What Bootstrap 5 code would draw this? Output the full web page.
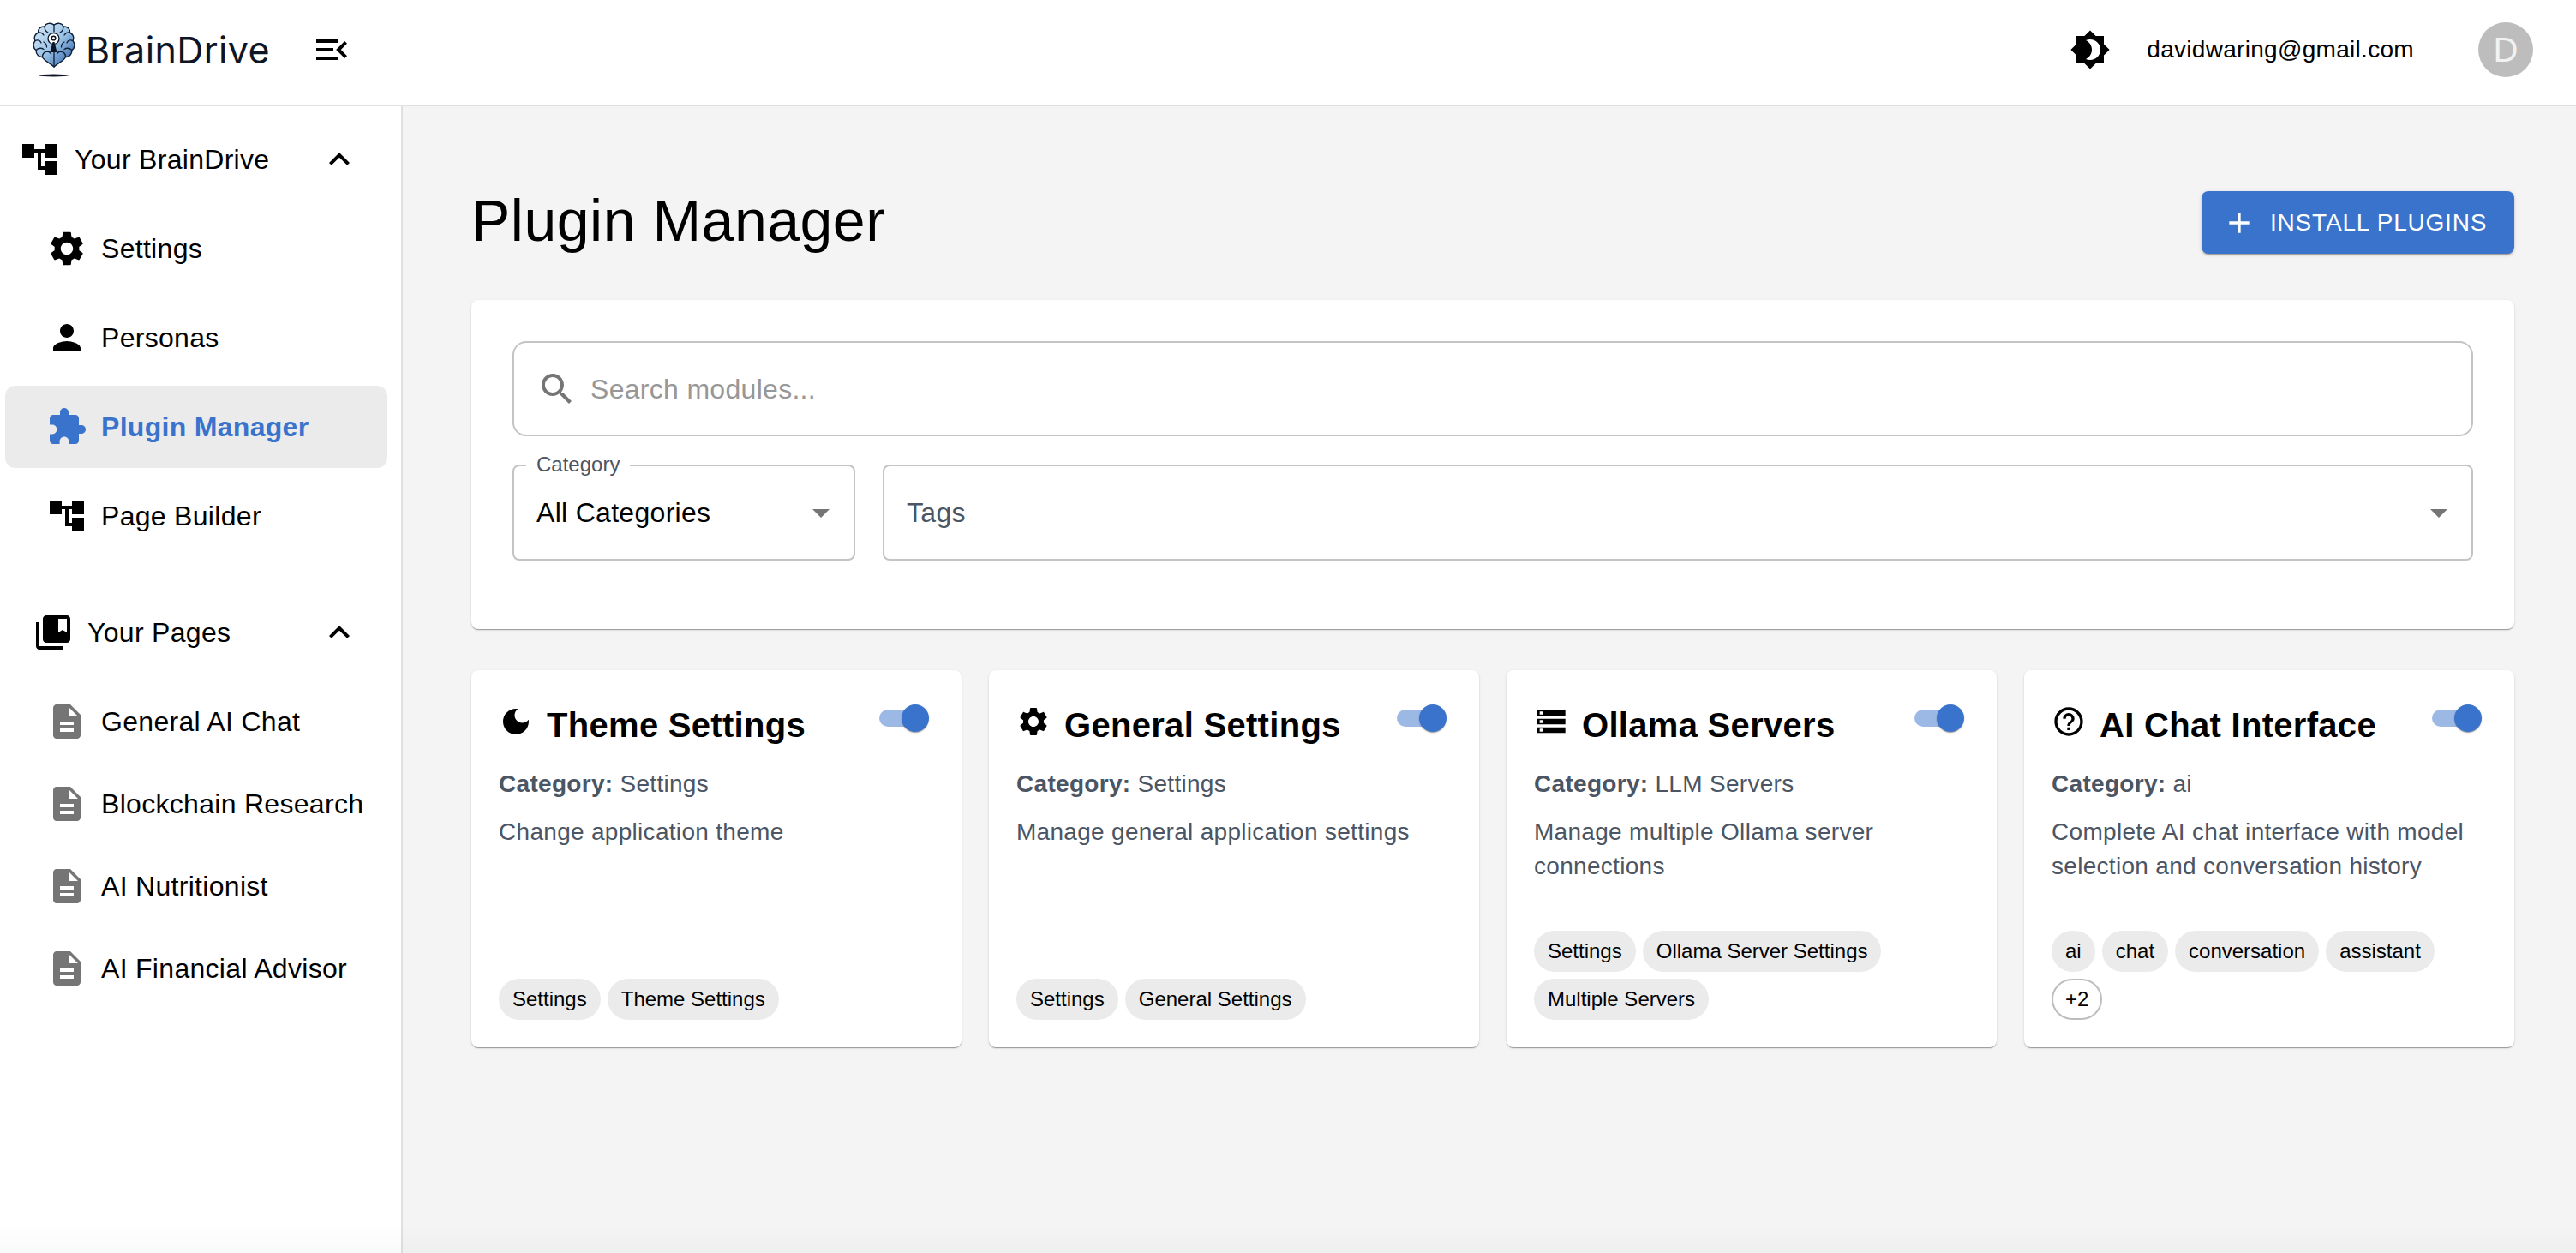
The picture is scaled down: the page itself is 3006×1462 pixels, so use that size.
<!DOCTYPE html>
<html lang="en">
<head>
<meta charset="utf-8">
<title>BrainDrive Plugin Manager</title>
<link href="https://cdn.jsdelivr.net/npm/bootstrap@5.3.0/dist/css/bootstrap.min.css" rel="stylesheet">
<style>
html,body{height:100%;}
body{margin:0;overflow:hidden;font-family:"Liberation Sans",Arial,sans-serif;background:#f4f4f4;color:#000;letter-spacing:.3px;}
svg{display:block;flex:none;fill:currentColor;}
.topbar{height:124px;background:#fff;border-bottom:2px solid #e0e0e0;padding:0 50px 6px 38px;}
.brand-name{font-family:Inter,sans-serif;font-weight:400;font-size:43px;letter-spacing:.4px;color:#0d1526;margin-left:12px;line-height:1;}
.menu-toggle{margin-left:48px;}
.user-mail{font-size:28px;margin-left:42px;margin-right:75px;}
.user-avatar{width:64px;height:64px;border-radius:50%;background:#bdbdbd;color:#f2f2f2;font-size:40px;letter-spacing:0;}
.shell{height:1338px;}
.side{width:470px;flex:none;background:#fff;border-right:2px solid #e0e0e0;padding:14px 16px 0 6px;}
.side-row{height:96px;font-size:32px;border-radius:12px;color:#000;text-decoration:none;}
.side-gap{margin-bottom:8px;}
.side-sub{padding-left:48px;gap:16px;}
.side-head1{padding-left:16px;gap:17px;}
.side-head2{padding-left:32px;gap:16px;margin-top:40px;}
.side-chev{margin-left:auto;margin-right:32px;}
.side-active{background:#ebebeb;color:#3a73cc;font-weight:700;}
.doc-ico{color:#757575;}
.main-area{padding:0 72px 0 80px;min-width:0;}
.page-head{height:226px;padding-top:99px;}
.page-title{font-size:68px;font-weight:400;line-height:1;margin:0;letter-spacing:.5px;}
.btn-install{width:365px;height:73px;background:#3a73cc;border:0;border-radius:8px;color:#fff;font-size:28px;letter-spacing:.8px;text-transform:uppercase;padding:0 0 0 24px;gap:16px;box-shadow:0 3px 1px -2px rgba(0,0,0,.2),0 2px 2px 0 rgba(0,0,0,.14),0 1px 5px 0 rgba(0,0,0,.12);}
.btn-install:hover{background:#3a73cc;color:#fff;}
.sheet{background:#fff;border:0;border-radius:8px;box-shadow:0 2px 1px -1px rgba(0,0,0,.2),0 1px 1px 0 rgba(0,0,0,.14),0 1px 3px 0 rgba(0,0,0,.12);}
.filter-sheet{height:384px;padding:48px;}
.search-box{height:111px;border:2px solid #c4c4c4;border-radius:16px;padding-left:26px;gap:15px;}
.search-ph{font-size:32px;color:#979797;}
.search-ico{color:#757575;}
.select-box{height:112px;border:2px solid #c4c4c4;border-radius:8px;font-size:32px;padding:0 14px 0 26px;}
.select-cat{width:400px;flex:none;}
.select-label{position:absolute;left:14px;top:-16px;background:#fff;padding:0 12px;font-size:24px;line-height:28px;color:#4b5563;letter-spacing:0;}
.select-ph{color:#4b5563;}
.select-ico{color:#757575;margin-left:auto;}
.filter-gap{gap:32px;margin-top:33px;}
.plug-grid{display:grid;grid-template-columns:repeat(4,1fr);gap:32px;margin-top:48px;}
.plug-sheet{height:440px;padding:32px;}
.plug-ico{width:40px;height:40px;}
.plug-title{font-size:40px;font-weight:700;line-height:48px;margin:0 0 0 16px;white-space:nowrap;letter-spacing:.3px;}
.plug-top{height:73px;margin-top:8px;}
.switch-track{position:relative;width:52px;height:20px;border-radius:10px;background:#9cb9e6;margin-left:auto;margin-right:12px;margin-top:6px;flex:none;}
.switch-thumb{position:absolute;right:-6px;top:-6px;width:32px;height:32px;border-radius:50%;background:#3a73cc;box-shadow:0 2px 1px -1px rgba(0,0,0,.2),0 1px 1px 0 rgba(0,0,0,.14),0 1px 3px 0 rgba(0,0,0,.12);}
.plug-meta{font-size:28px;line-height:40px;color:#4b5563;margin:0;}
.plug-desc{font-size:28px;line-height:40px;color:#4b5563;margin:16px 0 0;}
.chip-wrap{margin-top:auto;gap:8px;}
.tag-chip{height:48px;border-radius:24px;background:#ebebeb;font-size:24px;padding:0 16px;line-height:48px;color:#000;white-space:nowrap;letter-spacing:0;}
.tag-more{background:#fff;border:2px solid #bdbdbd;line-height:44px;padding:0 14px;}
.bottom-fade{position:fixed;left:0;right:0;bottom:0;height:36px;background:linear-gradient(to bottom,rgba(0,0,0,0),rgba(0,0,0,.018));pointer-events:none;}
</style>
</head>
<body>
<header class="topbar d-flex align-items-center">
  <svg width="50" height="66" viewBox="0 0 50 66" aria-label="BrainDrive logo">
    <defs><linearGradient id="brainFill" x1=".05" y1=".05" x2=".95" y2=".95"><stop offset="0" stop-color="#d3e6f6"/><stop offset=".5" stop-color="#9cc3e6"/><stop offset=".78" stop-color="#5c8cc2"/><stop offset="1" stop-color="#1d4a86"/></linearGradient></defs>
    <path d="M25 4C21 1 15.500 2 14 6 9.500 5.500 6 9 6.500 13 2.500 15 1 19 3 22.500 .2 26 .5 31 4 33.500 4 38.500 7.500 42 11.500 41.500 13.500 46.500 20 48 25 53 30 48 36.500 46.500 38.500 41.500 42.500 42 46 38.500 46 33.500 49.500 31 49.800 26 47 22.500 49 19 47.500 15 43.500 13 44 9 40.500 5.500 36 6 34.500 2 29 1 25 4Z" fill="url(#brainFill)" stroke="#0f2038" stroke-width="1.400"/>
    <g fill="none" stroke="#0f2038" stroke-width="1.300" stroke-linecap="round"><path d="M25 4v8M25 36v17M14 6c0 4 2 6 4 7M6.500 13c3-.5 5 .5 6.500 3M3 22.500c3-1.500 6-.5 7 2.500M4 33.500c3-2.500 6-3 9-1M11.500 41.500c0-3.500 2-6 6-6.500 2 0 3 1 4 3M36 6c0 4-2 6-4 7M43.500 13c-3-.5-5 .5-6.500 3M47 22.500c-3-1.500-6-.5-7 2.500M46 33.500c-3-2.500-6-3-9-1M38.500 41.500c0-3.500-2-6-6-6.500-2 0-3 1-4 3M13 24c2 1 3.500 3 3.500 6M37 24c-2 1-3.500 3-3.500 6"/></g>
    <circle cx="24.500" cy="20" r="6.500" fill="#fff" stroke="#0b1526" stroke-width="1.300"/>
    <circle cx="24.500" cy="19.500" r="2.300" fill="none" stroke="#0b1526" stroke-width="1.600"/>
    <path d="M23.500 24h2l3 12h-8z" fill="#0b1526"/>
    <ellipse cx="24.500" cy="63" rx="17.500" ry="1.400" fill="#0b1526"/>
  </svg>
  <span class="brand-name">BrainDrive</span>
  <svg class="menu-toggle" width="48" height="48" viewBox="0 0 24 24"><path d="M3 18h13v-2H3v2zm0-5h10v-2H3v2zm0-7v2h13V6H3zm18 9.590L17.420 12 21 8.410 19.590 7l-5 5 5 5L21 15.590z"/></svg>
  <svg class="ms-auto" width="48" height="48" viewBox="0 0 24 24"><path fill-rule="evenodd" d="M20 8.690V4h-4.690L12 .69 8.690 4H4v4.690L.69 12 4 15.310V20h4.690L12 23.310 15.310 20H20v-4.690L23.310 12 20 8.690zM12 18c-.89 0-1.740-.2-2.500-.55C11.560 16.500 13 14.420 13 12s-1.440-4.500-3.500-5.450C10.260 6.200 11.110 6 12 6c3.310 0 6 2.690 6 6s-2.690 6-6 6z"/></svg>
  <span class="user-mail">davidwaring@gmail.com</span>
  <div class="user-avatar d-flex align-items-center justify-content-center">D</div>
</header>
<div class="shell d-flex">
  <nav class="side">
    <div class="side-row side-gap side-head1 d-flex align-items-center">
      <svg width="48" height="48" viewBox="0 0 24 24"><path d="M22 11V3h-7v3H9V3H2v8h7V8h2v10h4v3h7v-8h-7v3h-2V8h2v3z"/></svg>
      <span>Your BrainDrive</span>
      <svg class="side-chev" width="48" height="48" viewBox="0 0 24 24"><path d="M12 8l-6 6 1.410 1.410L12 10.830l4.590 4.580L18 14z"/></svg>
    </div>
    <a class="side-row side-gap side-sub d-flex align-items-center" href="#">
      <svg width="48" height="48" viewBox="0 0 24 24"><path d="M19.140 12.940c.04-.3.06-.61.06-.94 0-.32-.02-.64-.07-.94l2.030-1.580c.18-.14.23-.41.12-.61l-1.920-3.320c-.12-.22-.37-.29-.59-.22l-2.390.96c-.5-.38-1.030-.7-1.620-.94l-.36-2.540c-.04-.24-.24-.41-.48-.41h-3.840c-.24 0-.43.17-.47.41l-.36 2.540c-.59.24-1.130.57-1.620.94l-2.390-.96c-.22-.08-.47 0-.59.22L2.740 8.870c-.12.21-.08.47.12.61l2.030 1.580c-.05.3-.09.63-.09.94s.02.64.07.94l-2.030 1.580c-.18.14-.23.41-.12.61l1.920 3.320c.12.22.37.29.59.22l2.390-.96c.5.38 1.030.7 1.620.94l.36 2.540c.05.24.24.41.48.41h3.840c.24 0 .44-.17.47-.41l.36-2.540c.59-.24 1.130-.56 1.620-.94l2.390.96c.22.08.47 0 .59-.22l1.920-3.320c.12-.22.07-.47-.12-.61l-2.010-1.580zM12 15.600c-1.980 0-3.600-1.620-3.600-3.600s1.620-3.600 3.600-3.600 3.600 1.620 3.600 3.600-1.620 3.600-3.600 3.600z"/></svg>
      <span>Settings</span>
    </a>
    <a class="side-row side-gap side-sub d-flex align-items-center" href="#">
      <svg width="48" height="48" viewBox="0 0 24 24"><path d="M12 12c2.210 0 4-1.790 4-4s-1.790-4-4-4-4 1.790-4 4 1.790 4 4 4zm0 2c-2.670 0-8 1.340-8 4v2h16v-2c0-2.660-5.330-4-8-4z"/></svg>
      <span>Personas</span>
    </a>
    <a class="side-row side-gap side-sub side-active d-flex align-items-center" href="#">
      <svg width="48" height="48" viewBox="0 0 24 24"><path d="M20.500 11H19V7c0-1.100-.9-2-2-2h-4V3.500C13 2.120 11.880 1 10.500 1S8 2.120 8 3.500V5H4c-1.100 0-1.990.9-1.990 2v3.800H3.500c1.490 0 2.700 1.210 2.700 2.700s-1.210 2.700-2.700 2.700H2V20c0 1.100.9 2 2 2h3.800v-1.500c0-1.490 1.210-2.700 2.700-2.700 1.490 0 2.700 1.210 2.700 2.700V22H17c1.100 0 2-.9 2-2v-4h1.500c1.380 0 2.500-1.120 2.500-2.500S21.880 11 20.500 11z"/></svg>
      <span>Plugin Manager</span>
    </a>
    <a class="side-row side-gap side-sub d-flex align-items-center" href="#">
      <svg width="48" height="48" viewBox="0 0 24 24"><path d="M22 11V3h-7v3H9V3H2v8h7V8h2v10h4v3h7v-8h-7v3h-2V8h2v3z"/></svg>
      <span>Page Builder</span>
    </a>
    <div class="side-row side-gap side-head2 d-flex align-items-center">
      <svg width="48" height="48" viewBox="0 0 24 24"><path d="M4 6H2v14c0 1.100.9 2 2 2h14v-2H4V6z"/><path d="M20 2H8c-1.100 0-2 .9-2 2v12c0 1.100.9 2 2 2h12c1.100 0 2-.9 2-2V4c0-1.100-.9-2-2-2zm0 10l-2.500-1.500L15 12V4h5v8z"/></svg>
      <span>Your Pages</span>
      <svg class="side-chev" width="48" height="48" viewBox="0 0 24 24"><path d="M12 8l-6 6 1.410 1.410L12 10.830l4.590 4.580L18 14z"/></svg>
    </div>
    <a class="side-row side-sub d-flex align-items-center" href="#">
      <svg class="doc-ico" width="48" height="48" viewBox="0 0 24 24"><path d="M14 2H6c-1.100 0-1.990.9-1.990 2L4 20c0 1.100.89 2 1.990 2H18c1.100 0 2-.9 2-2V8l-6-6zm2 16H8v-2h8v2zm0-4H8v-2h8v2zm-3-5V3.500L18.500 9H13z"/></svg>
      <span>General AI Chat</span>
    </a>
    <a class="side-row side-sub d-flex align-items-center" href="#">
      <svg class="doc-ico" width="48" height="48" viewBox="0 0 24 24"><path d="M14 2H6c-1.100 0-1.990.9-1.990 2L4 20c0 1.100.89 2 1.990 2H18c1.100 0 2-.9 2-2V8l-6-6zm2 16H8v-2h8v2zm0-4H8v-2h8v2zm-3-5V3.500L18.500 9H13z"/></svg>
      <span>Blockchain Research</span>
    </a>
    <a class="side-row side-sub d-flex align-items-center" href="#">
      <svg class="doc-ico" width="48" height="48" viewBox="0 0 24 24"><path d="M14 2H6c-1.100 0-1.990.9-1.990 2L4 20c0 1.100.89 2 1.990 2H18c1.100 0 2-.9 2-2V8l-6-6zm2 16H8v-2h8v2zm0-4H8v-2h8v2zm-3-5V3.500L18.500 9H13z"/></svg>
      <span>AI Nutritionist</span>
    </a>
    <a class="side-row side-sub d-flex align-items-center" href="#">
      <svg class="doc-ico" width="48" height="48" viewBox="0 0 24 24"><path d="M14 2H6c-1.100 0-1.990.9-1.990 2L4 20c0 1.100.89 2 1.990 2H18c1.100 0 2-.9 2-2V8l-6-6zm2 16H8v-2h8v2zm0-4H8v-2h8v2zm-3-5V3.500L18.500 9H13z"/></svg>
      <span>AI Financial Advisor</span>
    </a>
  </nav>
  <main class="main-area flex-grow-1">
    <div class="page-head d-flex justify-content-between align-items-start">
      <h1 class="page-title">Plugin Manager</h1>
      <button type="button" class="btn btn-install d-flex align-items-center" aria-label="Install plugins">
        <svg width="40" height="40" viewBox="0 0 24 24"><path d="M19 13h-6v6h-2v-6H5v-2h6V5h2v6h6v2z"/></svg>
        <span>Install Plugins</span>
      </button>
    </div>
    <section class="sheet filter-sheet">
      <div class="search-box d-flex align-items-center">
        <svg class="search-ico" width="48" height="48" viewBox="0 0 24 24"><path d="M15.500 14h-.79l-.28-.27C15.410 12.590 16 11.110 16 9.500 16 5.910 13.090 3 9.500 3S3 5.910 3 9.500 5.910 16 9.500 16c1.610 0 3.090-.59 4.230-1.570l.27.28v.79l5 4.990L20.490 19l-4.990-5zm-6 0C7.010 14 5 11.990 5 9.500S7.010 5 9.500 5 14 7.010 14 9.500 11.990 14 9.500 14z"/></svg>
        <span class="search-ph">Search modules...</span>
      </div>
      <div class="d-flex filter-gap">
        <div class="select-box select-cat position-relative d-flex align-items-center">
          <span class="select-label">Category</span>
          <span>All Categories</span>
          <svg class="select-ico" width="48" height="48" viewBox="0 0 24 24"><path d="M7 10l5 5 5-5z"/></svg>
        </div>
        <div class="select-box flex-grow-1 d-flex align-items-center">
          <span class="select-ph">Tags</span>
          <svg class="select-ico" width="48" height="48" viewBox="0 0 24 24"><path d="M7 10l5 5 5-5z"/></svg>
        </div>
      </div>
    </section>
    <div class="plug-grid">
      <article class="sheet plug-sheet d-flex flex-column">
        <div class="plug-top d-flex align-items-start">
          <svg class="plug-ico" viewBox="0 0 24 24"><path d="M12 3c-4.970 0-9 4.030-9 9s4.030 9 9 9 9-4.030 9-9c0-.46-.04-.92-.1-1.360-.98 1.370-2.580 2.260-4.400 2.260-2.980 0-5.400-2.420-5.400-5.400 0-1.810.89-3.420 2.260-4.400-.44-.06-.9-.1-1.360-.1z"/></svg>
          <h2 class="plug-title">Theme Settings</h2>
          <div class="switch-track"><div class="switch-thumb"></div></div>
        </div>
        <p class="plug-meta"><strong>Category:</strong> Settings</p>
        <p class="plug-desc">Change application theme</p>
        <div class="chip-wrap d-flex flex-wrap">
          <span class="tag-chip">Settings</span><span class="tag-chip">Theme Settings</span>
        </div>
      </article>
      <article class="sheet plug-sheet d-flex flex-column">
        <div class="plug-top d-flex align-items-start">
          <svg class="plug-ico" viewBox="0 0 24 24"><path d="M19.140 12.940c.04-.3.06-.61.06-.94 0-.32-.02-.64-.07-.94l2.030-1.580c.18-.14.23-.41.12-.61l-1.920-3.320c-.12-.22-.37-.29-.59-.22l-2.390.96c-.5-.38-1.030-.7-1.620-.94l-.36-2.540c-.04-.24-.24-.41-.48-.41h-3.840c-.24 0-.43.17-.47.41l-.36 2.540c-.59.24-1.130.57-1.620.94l-2.390-.96c-.22-.08-.47 0-.59.22L2.740 8.870c-.12.21-.08.47.12.61l2.030 1.580c-.05.3-.09.63-.09.94s.02.64.07.94l-2.030 1.580c-.18.14-.23.41-.12.61l1.920 3.320c.12.22.37.29.59.22l2.390-.96c.5.38 1.030.7 1.620.94l.36 2.540c.05.24.24.41.48.41h3.840c.24 0 .44-.17.47-.41l.36-2.540c.59-.24 1.130-.56 1.620-.94l2.390.96c.22.08.47 0 .59-.22l1.920-3.320c.12-.22.07-.47-.12-.61l-2.010-1.580zM12 15.600c-1.980 0-3.600-1.620-3.600-3.600s1.620-3.600 3.600-3.600 3.600 1.620 3.600 3.600-1.620 3.600-3.600 3.600z"/></svg>
          <h2 class="plug-title">General Settings</h2>
          <div class="switch-track"><div class="switch-thumb"></div></div>
        </div>
        <p class="plug-meta"><strong>Category:</strong> Settings</p>
        <p class="plug-desc">Manage general application settings</p>
        <div class="chip-wrap d-flex flex-wrap">
          <span class="tag-chip">Settings</span><span class="tag-chip">General Settings</span>
        </div>
      </article>
      <article class="sheet plug-sheet d-flex flex-column">
        <div class="plug-top d-flex align-items-start">
          <svg class="plug-ico" viewBox="0 0 24 24"><path d="M2 20h20v-4H2v4zm2-3h2v2H4v-2zM2 4v4h20V4H2zm4 3H4V5h2v2zm-4 7h20v-4H2v4zm2-3h2v2H4v-2z"/></svg>
          <h2 class="plug-title">Ollama Servers</h2>
          <div class="switch-track"><div class="switch-thumb"></div></div>
        </div>
        <p class="plug-meta"><strong>Category:</strong> LLM Servers</p>
        <p class="plug-desc">Manage multiple Ollama server connections</p>
        <div class="chip-wrap d-flex flex-wrap">
          <span class="tag-chip">Settings</span><span class="tag-chip">Ollama Server Settings</span><span class="tag-chip">Multiple Servers</span>
        </div>
      </article>
      <article class="sheet plug-sheet d-flex flex-column">
        <div class="plug-top d-flex align-items-start">
          <svg class="plug-ico" viewBox="0 0 24 24"><path d="M11 18h2v-2h-2v2zm1-16C6.480 2 2 6.480 2 12s4.480 10 10 10 10-4.480 10-10S17.520 2 12 2zm0 18c-4.410 0-8-3.590-8-8s3.590-8 8-8 8 3.590 8 8-3.590 8-8 8zm0-14c-2.210 0-4 1.790-4 4h2c0-1.100.9-2 2-2s2 .9 2 2c0 2-3 1.750-3 5h2c0-2.250 3-2.500 3-5 0-2.210-1.790-4-4-4z"/></svg>
          <h2 class="plug-title">AI Chat Interface</h2>
          <div class="switch-track"><div class="switch-thumb"></div></div>
        </div>
        <p class="plug-meta"><strong>Category:</strong> ai</p>
        <p class="plug-desc">Complete AI chat interface with model selection and conversation history</p>
        <div class="chip-wrap d-flex flex-wrap">
          <span class="tag-chip">ai</span><span class="tag-chip">chat</span><span class="tag-chip">conversation</span><span class="tag-chip">assistant</span><span class="tag-chip tag-more">+2</span>
        </div>
      </article>
    </div>
  </main>
</div>
<div class="bottom-fade"></div>
<script src="https://cdn.jsdelivr.net/npm/bootstrap@5.3.0/dist/js/bootstrap.bundle.min.js"></script>
</body>
</html>
